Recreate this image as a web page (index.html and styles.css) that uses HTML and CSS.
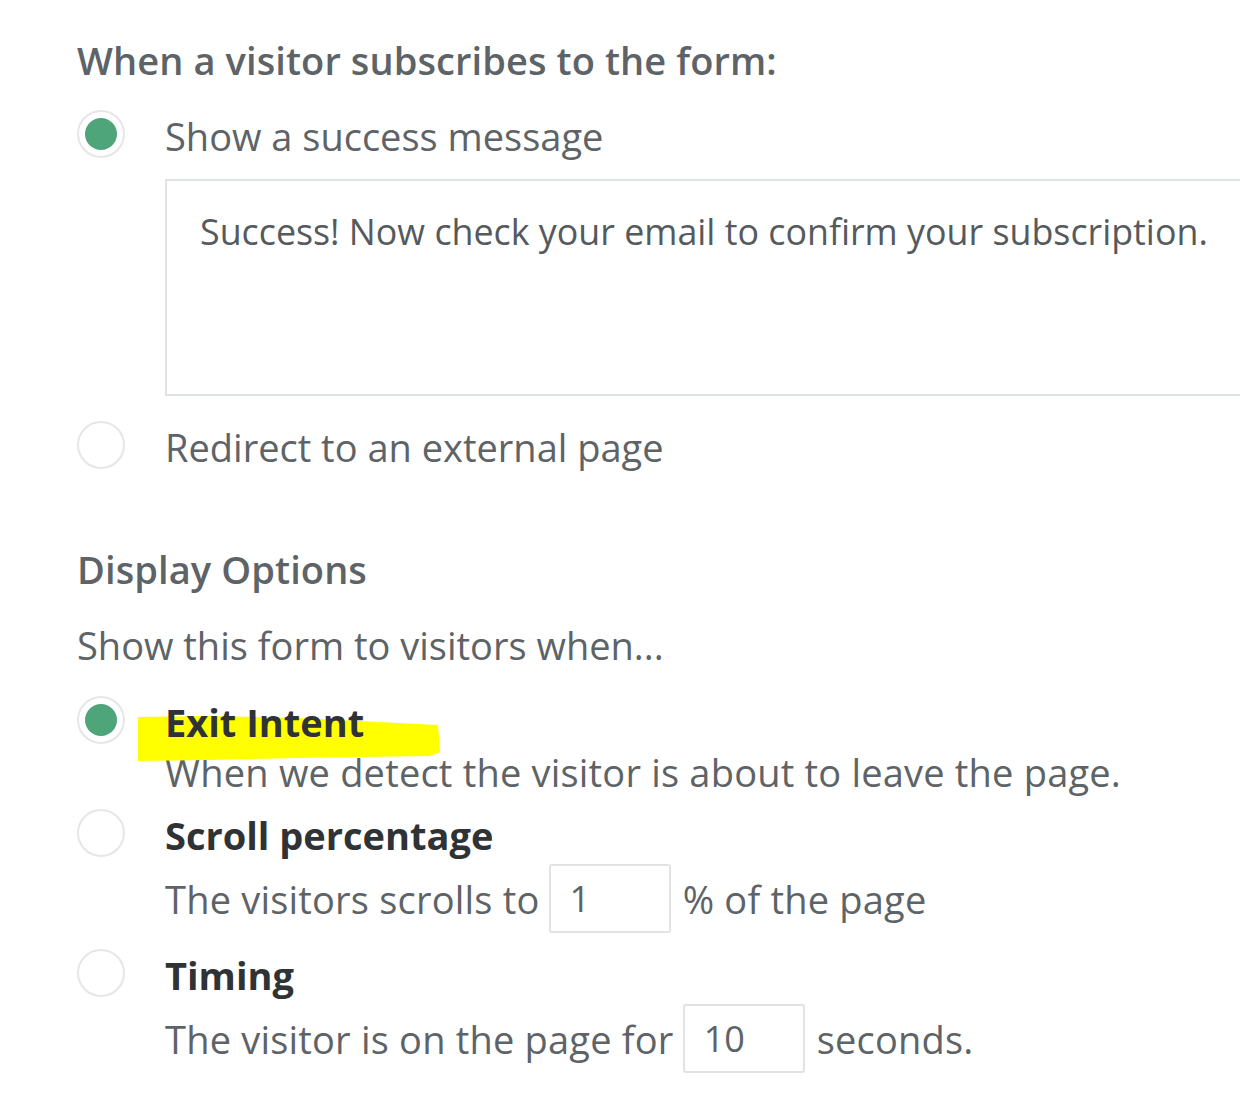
FILE: index.html
```html
<!DOCTYPE html>
<html lang="en">
<head>
    <meta charset="UTF-8">
    <title>Form settings</title>
    <link rel="stylesheet" href="styles.css">
</head>
<body>
    <div class="settings">
        <h2 class="section-title">When a visitor subscribes to the form:</h2>

        <div class="option first">
            <span class="radio checked"></span>
            <span class="option-label">Show a success message</span>
        </div>
        <div class="message-box">Success! Now check your email to confirm your subscription.</div>

        <div class="option">
            <span class="radio"></span>
            <span class="option-label">Redirect to an external page</span>
        </div>

        <h2 class="section-title display-title">Display Options</h2>
        <p class="hint">Show this form to visitors when...</p>

        <div class="trigger">
            <span class="radio checked"></span>
            <div class="trigger-body">
                <svg class="marker" width="302" height="46" viewBox="0 0 302 46">
                    <path d="M0 1 L70 0 L160 2 L240 6 L300 9 L302 36 L292 40 L160 42 L70 44 L0 45 Z" fill="#ffff00"/>
                </svg>
                <div class="trigger-name">Exit Intent</div>
                <div class="trigger-desc">When we detect the visitor is about to leave the page.</div>
            </div>
        </div>

        <div class="trigger">
            <span class="radio"></span>
            <div class="trigger-body">
                <div class="trigger-name">Scroll percentage</div>
                <div class="trigger-desc with-input">The visitors scrolls to <span class="num-box">1</span> % of the page</div>
            </div>
        </div>

        <div class="trigger">
            <span class="radio"></span>
            <div class="trigger-body">
                <div class="trigger-name">Timing</div>
                <div class="trigger-desc with-input">The visitor is on the page for <span class="num-box">10</span> seconds.</div>
            </div>
        </div>
    </div>
</body>
</html>
```

FILE: styles.css
```css
body {
    margin: 0;
    background-color: #fff;
    font-family: "Open Sans", sans-serif;
    color: #5d6367;
    overflow: hidden;
}
.settings {
    padding: 34px 0 0 77px;
}
.section-title {
    font-size: 38px;
    font-weight: 600;
    margin: 0;
    line-height: 52px;
    color: #5d6367;
    letter-spacing: 0.1px;
}
.option {
    display: flex;
    align-items: center;
    gap: 40px;
    height: 60px;
    margin-top: 19px;
}
.option.first {
    margin-top: 18px;
}
.radio {
    box-sizing: border-box;
    width: 48px;
    height: 48px;
    border: 2px solid #e6e6e6;
    border-radius: 50%;
    display: flex;
    align-items: center;
    justify-content: center;
    flex-shrink: 0;
}
.radio.checked::after {
    content: "";
    width: 32px;
    height: 32px;
    border-radius: 50%;
    background-color: #4fa57a;
}
.option-label {
    font-size: 38px;
    line-height: 52px;
    padding-top: 4px;
}
.message-box {
    margin: 15px 0 0 88px;
    height: 217px;
    box-sizing: border-box;
    border: 2px solid #dfe3e3;
    border-right: none;
    padding: 25px 0 0 33px;
    font-size: 35.8px;
    line-height: 50px;
    color: #555a5e;
}
.display-title {
    margin-top: 68px;
}
.hint {
    font-size: 38px;
    line-height: 52px;
    margin: 24px 0 25px;
}
.trigger {
    display: flex;
    gap: 40px;
    margin-bottom: 13px;
}
.trigger:last-child {
    margin-bottom: 0;
}
.trigger-body {
    position: relative;
}
.trigger-name {
    position: relative;
    z-index: 2;
    font-size: 38px;
    font-weight: 700;
    color: #2f3336;
    line-height: 52px;
}
.trigger-desc {
    font-size: 38px;
    line-height: 48px;
    letter-spacing: 0.2px;
}
.trigger-desc.with-input {
    line-height: 76px;
    height: 76px;
    margin-bottom: -1px;
}
.marker {
    position: absolute;
    left: -27px;
    top: 20px;
    z-index: 1;
}
.num-box {
    display: inline-block;
    box-sizing: border-box;
    width: 122px;
    height: 69px;
    border: 2px solid #e2e2e2;
    border-radius: 3px;
    padding-left: 19px;
    margin: 3px 2px 0 -1px;
    vertical-align: top;
    line-height: 65px;
    font-size: 36px;
    letter-spacing: 0;
}
```
